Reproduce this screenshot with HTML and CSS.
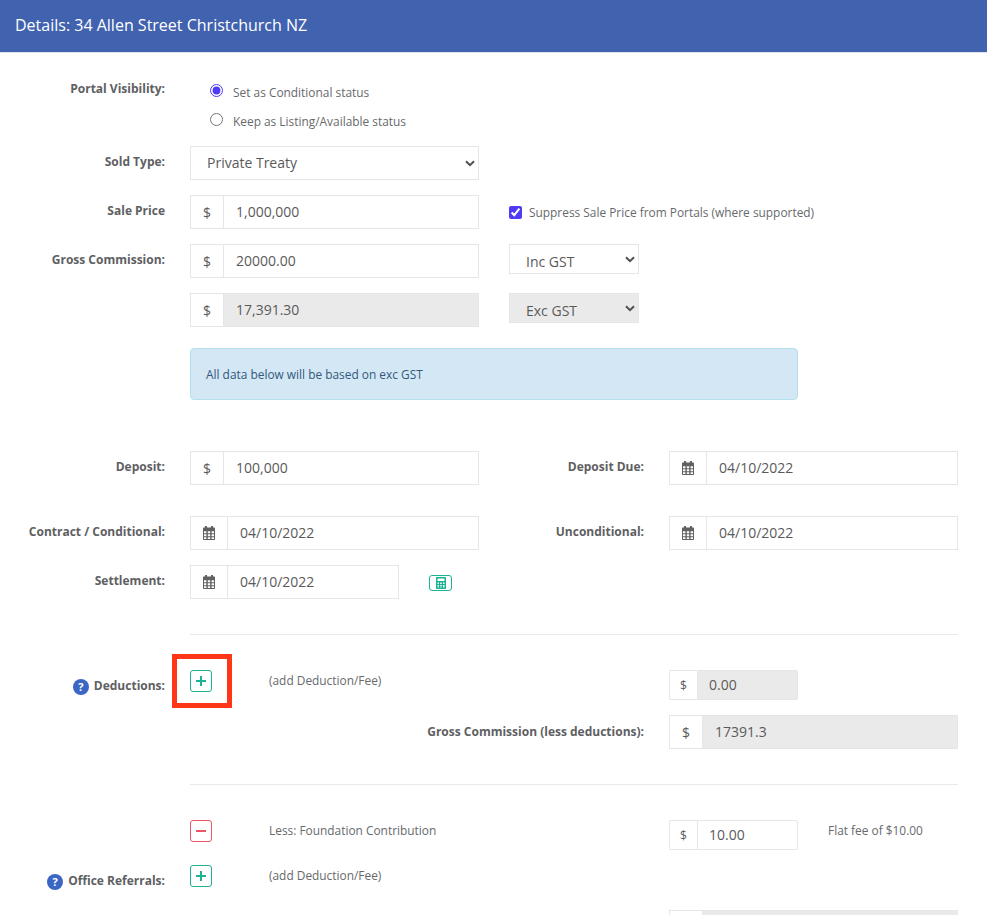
FILE: index.html
```html
<!DOCTYPE html>
<html lang="en">
<head>
<meta charset="utf-8">
<title>Details: 34 Allen Street Christchurch NZ</title>
<link rel="stylesheet" href="styles.css">
</head>
<body>
<svg class="defs" width="0" height="0" aria-hidden="true">
  <symbol id="cal" viewBox="0 0 12 14">
    <path fill-rule="evenodd" d="M2.4 0h1.2c.3 0 .5.2.5.5V1.5h3.8V.5c0-.3.2-.5.5-.5h1.2c.3 0 .5.2.5.5v1h.9c.6 0 1 .4 1 1V13c0 .6-.4 1-1 1H1c-.6 0-1-.4-1-1V2.5c0-.6.4-1 1-1h.9v-1c0-.3.2-.5.5-.5zM1 5.2v2h2.4v-2zm3.8 0v2h2.4v-2zm3.8 0v2H11v-2zM1 8.2v2h2.4v-2zm3.8 0v2h2.4v-2zm3.8 0v2H11v-2zM1 11.2V13h2.4v-1.800zm3.8 0V13h2.400v-1.800zm3.800 0V13H11v-1.800z"/>
  </symbol>
  <symbol id="calc" viewBox="0 0 10 12">
    <path fill-rule="evenodd" d="M1 0h8c.6 0 1 .4 1 1v10c0 .6-.4 1-1 1H1c-.6 0-1-.4-1-1V1c0-.6.4-1 1-1zm.5 1.500v2.500h7V1.500zm0 4V7h1.500V5.500zm2.750 0V7h1.500V5.500zm2.750 0V7h1.500V5.500zM1.500 8v1.500h1.500V8zm2.750 0v1.500h1.500V8zm2.750 0v2.500h1.500V8zm-5.500 2.500V11h1.500v-.5zm2.750 0V11h1.500v-.5z"/>
  </symbol>
  <symbol id="plus" viewBox="0 0 10 10">
    <path d="M4 0h2v4h4v2H6v4H4V6H0V4h4z"/>
  </symbol>
  <symbol id="minus" viewBox="0 0 10 10">
    <path d="M0 4h10v2H0z"/>
  </symbol>
</svg>

<header class="page-header">Details: 34 Allen Street Christchurch NZ</header>

<main class="form">
  <div class="row row-portal">
    <div class="label">Portal Visibility:</div>
    <div class="span-rest radios">
      <label class="radio"><input type="radio" name="vis" checked><span>Set as Conditional status</span></label>
      <label class="radio"><input type="radio" name="vis"><span>Keep as Listing/Available status</span></label>
    </div>
  </div>

  <div class="row">
    <div class="label">Sold Type:</div>
    <div class="select-wrap">
      <select class="select select-lg"><option>Private Treaty</option></select>
      <svg class="chevron" viewBox="0 0 10 7"><path d="M1 1.200l4 4 4-4" fill="none" stroke="currentColor" stroke-width="2"/></svg>
    </div>
  </div>

  <div class="row">
    <div class="label">Sale Price</div>
    <div class="group">
      <span class="addon">$</span>
      <input class="input" value="1,000,000">
    </div>
    <label class="check span-rest"><input type="checkbox" checked><span>Suppress Sale Price from Portals (where supported)</span></label>
  </div>

  <div class="row">
    <div class="label">Gross Commission:</div>
    <div class="group">
      <span class="addon">$</span>
      <input class="input" value="20000.00">
    </div>
    <div class="select-wrap select-gst span-rest">
      <select class="select select-sm"><option>Inc GST</option></select>
      <svg class="chevron" viewBox="0 0 10 7"><path d="M1 1.200l4 4 4-4" fill="none" stroke="currentColor" stroke-width="2"/></svg>
    </div>
  </div>

  <div class="row row-before-alert">
    <div></div>
    <div class="group">
      <span class="addon">$</span>
      <input class="input readonly" value="17,391.30" readonly>
    </div>
    <div class="select-wrap select-gst span-rest">
      <select class="select select-sm readonly" disabled><option>Exc GST</option></select>
      <svg class="chevron" viewBox="0 0 10 7"><path d="M1 1.200l4 4 4-4" fill="none" stroke="currentColor" stroke-width="2"/></svg>
    </div>
  </div>

  <div class="row row-alert">
    <div></div>
    <div class="alert">All data below will be based on exc GST</div>
  </div>

  <div class="row row-deposit">
    <div class="label">Deposit:</div>
    <div class="group">
      <span class="addon">$</span>
      <input class="input" value="100,000">
    </div>
    <div class="label">Deposit Due:</div>
    <div class="group">
      <span class="addon addon-cal"><svg class="cal"><use href="#cal"/></svg></span>
      <input class="input" value="04/10/2022">
    </div>
  </div>

  <div class="row">
    <div class="label">Contract / Conditional:</div>
    <div class="group">
      <span class="addon addon-cal"><svg class="cal"><use href="#cal"/></svg></span>
      <input class="input" value="04/10/2022">
    </div>
    <div class="label">Unconditional:</div>
    <div class="group">
      <span class="addon addon-cal"><svg class="cal"><use href="#cal"/></svg></span>
      <input class="input" value="04/10/2022">
    </div>
  </div>

  <div class="row row-settlement">
    <div class="label">Settlement:</div>
    <div class="settlement span-rest">
      <div class="group group-settle">
        <span class="addon addon-cal"><svg class="cal"><use href="#cal"/></svg></span>
        <input class="input" value="04/10/2022">
      </div>
      <button class="calc-btn" type="button"><svg class="calc"><use href="#calc"/></svg></button>
    </div>
  </div>

  <hr class="rule">

  <div class="row">
    <div class="label"><span class="help">?</span>Deductions:</div>
    <div class="action annotated">
      <button class="icon-btn add" type="button"><svg class="sign"><use href="#plus"/></svg></button>
      <span class="action-text">(add Deduction/Fee)</span>
      <span class="marker"></span>
    </div>
    <div></div>
    <div class="group group-sm">
      <span class="addon addon-sm">$</span>
      <input class="input input-sm readonly" value="0.00" readonly>
    </div>
  </div>

  <div class="row">
    <div></div>
    <div class="label label-wide">Gross Commission (less deductions):</div>
    <div class="group">
      <span class="addon">$</span>
      <input class="input readonly" value="17391.3" readonly>
    </div>
  </div>

  <hr class="rule rule-2">

  <div class="row">
    <div></div>
    <div class="action">
      <button class="icon-btn remove" type="button"><svg class="sign"><use href="#minus"/></svg></button>
      <span class="action-text">Less: Foundation Contribution</span>
    </div>
    <div></div>
    <div class="fee">
      <div class="group group-sm">
        <span class="addon addon-sm">$</span>
        <input class="input input-sm" value="10.00">
      </div>
      <span class="fee-note">Flat fee of $10.00</span>
    </div>
  </div>

  <div class="row row-referrals">
    <div class="label"><span class="help">?</span>Office Referrals:</div>
    <div class="action">
      <button class="icon-btn add" type="button"><svg class="sign"><use href="#plus"/></svg></button>
      <span class="action-text">(add Deduction/Fee)</span>
    </div>
  </div>

  <div class="row row-last">
    <div></div>
    <div></div>
    <div></div>
    <div class="group">
      <span class="addon"></span>
      <input class="input readonly" value="" readonly>
    </div>
  </div>
</main>
</body>
</html>
```

FILE: styles.css
```css
* { box-sizing: border-box; }

html, body {
  margin: 0;
  height: 915px;
  overflow: hidden;
  background: #fff;
}

body {
  font-family: "Open Sans", "Liberation Sans", sans-serif;
  font-size: 12px;
  color: #676a6c;
}

.defs { position: absolute; }

.page-header {
  height: 53px;
  padding-left: 15px;
  font-size: 16px;
  line-height: 50px;
  color: #fff;
  background: #4162af;
  border-bottom: 1px solid #dfe3ec;
}

.form { padding-top: 20px; }

.row {
  display: grid;
  grid-template-columns: 165px 289px 140px 289px;
  column-gap: 25px;
  margin-bottom: 15px;
  min-height: 22px;
}

.span-rest { grid-column: 3 / 5; }

.label {
  padding-top: 7px;
  font-size: 12px;
  font-weight: 700;
  line-height: 18px;
  text-align: right;
  color: #5e6062;
}

.label-wide {
  grid-column: 2 / 4;
  padding-top: 8px;
}

/* Portal radios */
.row-portal { margin-bottom: 10px; }

.radios {
  grid-column: 2 / 5;
  padding: 5px 0 0 20px;
}

.radio {
  display: flex;
  align-items: center;
  height: 29px;
  font-size: 11.9px;
  color: #676a6c;
}

.radio span { margin-top: -2px; }

.radio input {
  width: 13px;
  height: 13px;
  margin: -4px 10px 0 0;
  accent-color: #4f3bf6;
}

/* Input groups */
.group {
  display: flex;
  height: 34px;
}

.addon {
  display: flex;
  flex: none;
  align-items: center;
  justify-content: center;
  width: 33px;
  font-size: 14px;
  color: #5a5a5a;
  background: #fff;
  border: 1px solid #e5e6e7;
  border-right: 0;
}

.addon-cal { width: 37px; }

.cal {
  width: 12px;
  height: 14px;
  fill: #5f6163;
}

.input {
  flex: 1;
  min-width: 0;
  height: 100%;
  padding: 0 12px 1px;
  font-family: inherit;
  font-size: 14px;
  color: #5a5a5a;
  background: #fff;
  border: 1px solid #e5e6e7;
  border-radius: 0;
  outline: 0;
}

.readonly { background: #eaeaea; }

.group-settle { width: 209px; }

.group-sm {
  width: 129px;
  height: 30px;
}

.addon-sm {
  width: 28px;
  font-size: 12px;
  border-radius: 2px 0 0 2px;
}

.input-sm {
  padding: 0 11px 2px;
  border-radius: 0 2px 2px 0;
}

/* Selects */
.select-wrap {
  position: relative;
  height: 34px;
}

.select {
  display: block;
  width: 100%;
  font-family: inherit;
  font-size: 14px;
  color: #5a5a5a;
  background: #fff;
  border: 1px solid #e5e6e7;
  border-radius: 0;
  outline: 0;
  opacity: 1;
  appearance: none;
}

.select-lg {
  height: 34px;
  padding: 0 0 1px 16px;
}

.select-sm {
  width: 130px;
  height: 30px;
  padding: 5px 0 0 16px;
}

.select-sm.readonly { background: #eaeaea; }

.select-gst { margin-left: 5px; }

.chevron {
  position: absolute;
  top: 14px;
  left: 275px;
  width: 10px;
  height: 7px;
  color: #505050;
  pointer-events: none;
}

.select-gst .chevron {
  top: 12px;
  left: 116px;
}

/* Checkbox */
.check {
  display: flex;
  align-items: center;
  height: 34px;
  padding-left: 5px;
  font-size: 11.9px;
}

.check input {
  width: 13px;
  height: 13px;
  margin: 0 7px 0 0;
  accent-color: #4f3bf6;
}

/* Alert */
.row-before-alert { margin-bottom: 21px; }
.row-alert { margin-bottom: 51px; }

.alert {
  grid-column: 2 / 5;
  width: 608px;
  height: 52px;
  padding-left: 15px;
  font-size: 11.9px;
  line-height: 50px;
  color: #33597c;
  background: #d4e7f5;
  border: 1px solid #b3e2ee;
  border-radius: 4px;
}

.row-deposit { margin-bottom: 31px; }
.row-settlement { margin-bottom: 35px; }

.settlement {
  grid-column: 2 / 5;
  display: flex;
  align-items: center;
  gap: 30px;
}

.calc-btn {
  display: flex;
  align-items: center;
  justify-content: center;
  width: 23px;
  height: 16px;
  margin-top: 2px;
  padding: 0;
  color: #1ab394;
  background: #fff;
  border: 1px solid #1ab394;
  border-radius: 3px;
}

.calc {
  width: 10px;
  height: 12px;
  fill: currentColor;
}

.rule {
  width: 768px;
  height: 1px;
  margin: 0 0 35px 190px;
  background: #e7eaec;
  border: 0;
}

.rule-2 { margin-top: 35px; }

/* Actions */
.action {
  position: relative;
  display: flex;
  align-items: flex-start;
  gap: 57px;
}

.icon-btn {
  display: flex;
  flex: none;
  align-items: center;
  justify-content: center;
  width: 22px;
  height: 22px;
  padding: 0;
  background: #fff;
  border: 1px solid;
  border-radius: 3px;
}

.add { color: #1ab394; }
.remove { color: #ed5565; }

.sign {
  width: 10px;
  height: 10px;
  fill: currentColor;
}

.action-text {
  padding-top: 1px;
  font-size: 11.9px;
  line-height: 18px;
}

.marker {
  position: absolute;
  top: -16px;
  left: -18px;
  width: 60px;
  height: 54px;
  border: 5px solid #ff3718;
}

.help {
  display: inline-block;
  width: 16px;
  height: 16px;
  margin-right: 5px;
  font-size: 11px;
  line-height: 16px;
  text-align: center;
  vertical-align: -1px;
  color: #fff;
  background: #3c66c4;
  border-radius: 50%;
}

.fee {
  display: flex;
  align-items: flex-start;
  gap: 30px;
}

.fee-note {
  padding-top: 1px;
  font-size: 11.9px;
  line-height: 18px;
  white-space: nowrap;
}

.row-referrals { margin-bottom: 20px; }
```
